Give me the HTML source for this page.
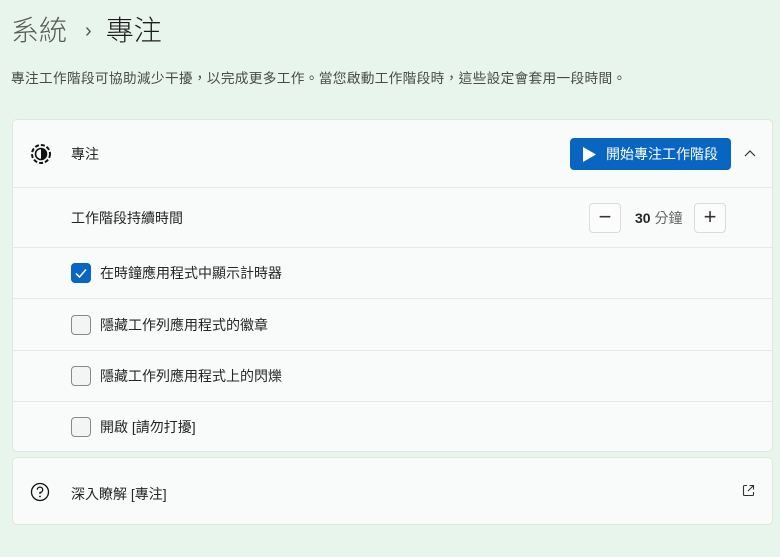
<!DOCTYPE html>
<html><head><meta charset="utf-8"><style>
*{margin:0;padding:0;box-sizing:border-box}
body{width:780px;height:557px;background:#e7f5ec;font-family:"Liberation Sans","Noto Sans CJK TC",sans-serif;color:#262626;position:relative;overflow:hidden}
.t{position:absolute;left:11px;top:12px;font-size:28px;font-weight:300;line-height:38px;color:#1b1b1b}
.t .a{color:#5b5b5b}
.t .s{font-size:20px;color:#555;margin:0 14px 0 18px;position:relative;top:-3px}
.d{position:absolute;left:11px;top:67px;font-size:13.7px;color:#4a4a4a;letter-spacing:0.3px}
.card{position:absolute;left:12px;right:7px;background:#f8fbf9;border:1px solid #dde8e2;border-radius:5px}
.row{position:absolute;left:0;right:0;border-top:1px solid #e3ebe6;font-size:14px}
.row span{position:absolute;top:50%;transform:translateY(-50%)}
.cb{position:absolute;left:58px;top:50%;margin-top:-10px;width:20px;height:20px;border:1px solid #888;border-radius:4px;background:#f3f5f4}
.cb.on{background:#0866c2;border-color:#0866c2}
.btn{position:absolute;left:557px;top:18px;width:161px;height:32px;background:#0866c2;border-radius:4px;color:#fff;font-size:14px;line-height:32px;padding-left:36px}
.sq{position:absolute;top:15px;width:32px;height:30px;border:1px solid #d8dcda;border-radius:4px;background:#fbfcfb;text-align:center;line-height:26px;font-size:22px;color:#333}
</style></head><body>
<div class="t"><span class="a">系統</span><span class="s">›</span>專注</div>
<div class="d">專注工作階段可協助減少干擾，以完成更多工作。當您啟動工作階段時，這些設定會套用一段時間。</div>
<div class="card" style="top:119px;height:333px">
 <div class="row" style="top:0;height:67px;border:none">
  <svg style="position:absolute;left:17px;top:23px" width="22" height="22" viewBox="0 0 22 22"><circle cx="11" cy="11" r="9" fill="none" stroke="#111" stroke-width="2" stroke-dasharray="4 2"/><circle cx="11" cy="11" r="5.5" fill="none" stroke="#111" stroke-width="1.6"/><path d="M11 5.5A5.5 5.5 0 0 1 11 16.5Z" fill="#111"/></svg>
  <span style="left:58px">專注</span>
  <div class="btn"><svg style="position:absolute;left:12px;top:9px" width="14" height="15"><path d="M1 0L14 7.5L1 15Z" fill="#fff"/></svg>開始專注工作階段</div>
  <svg style="position:absolute;left:731px;top:29px" width="12" height="8"><path d="M1 7L6 2L11 7" fill="none" stroke="#333" stroke-width="1.2"/></svg>
 </div>
 <div class="row" style="top:67px;height:60px">
  <span style="left:58px">工作階段持續時間</span>
  <div class="sq" style="left:576px">−</div>
  <span style="left:622px;font-weight:bold">30 <b style="font-weight:normal;color:#666">分鐘</b></span>
  <div class="sq" style="left:681px">+</div>
 </div>
 <div class="row" style="top:127px;height:51px"><div class="cb on"><svg width="18" height="18"><path d="M4 9.5L7.5 13L14 5.5" fill="none" stroke="#fff" stroke-width="1.5"/></svg></div><span style="left:87px">在時鐘應用程式中顯示計時器</span></div>
 <div class="row" style="top:178px;height:52px"><div class="cb"></div><span style="left:87px">隱藏工作列應用程式的徽章</span></div>
 <div class="row" style="top:230px;height:51px"><div class="cb"></div><span style="left:87px">隱藏工作列應用程式上的閃爍</span></div>
 <div class="row" style="top:281px;height:51px"><div class="cb"></div><span style="left:87px">開啟 [請勿打擾]</span></div>
</div>
<div class="card" style="top:457px;height:68px">
 <svg style="position:absolute;left:17px;top:24px" width="20" height="20"><circle cx="10" cy="10" r="8.5" fill="none" stroke="#111" stroke-width="1.3"/><path d="M7.3 7.8A2.7 2.7 0 1 1 10 10.5V12" fill="none" stroke="#111" stroke-width="1.3"/><circle cx="10" cy="14.5" r="0.9" fill="#111"/></svg>
 <span style="position:absolute;left:58px;top:26px;font-size:14px">深入瞭解 [專注]</span>
 <svg style="position:absolute;left:729px;top:26px" width="13" height="13"><path d="M5 1.5H2.5a1 1 0 0 0-1 1v8a1 1 0 0 0 1 1h8a1 1 0 0 0 1-1V8M7.5 1.5h4v4M11.5 1.5L6 7" fill="none" stroke="#333" stroke-width="1.1"/></svg>
</div>
</body></html>
